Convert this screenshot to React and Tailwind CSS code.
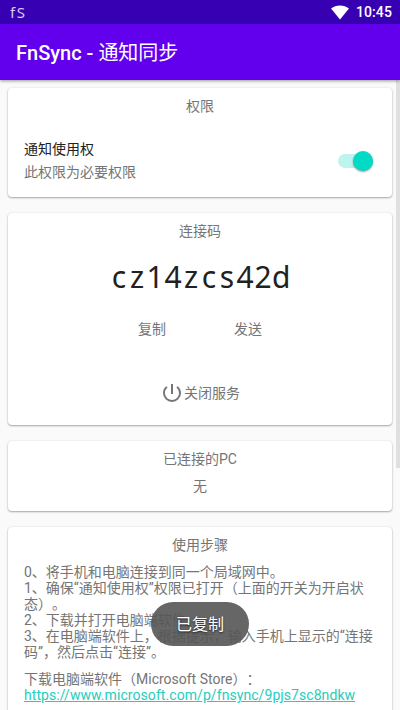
import React, { useState } from 'react';

const CODE = 'cz14zcs42d';

const STEPS = [
  '0、将手机和电脑连接到同一个局域网中。',
  '1、确保“通知使用权”权限已打开（上面的开关为开启状态）。',
  '2、下载并打开电脑端软件。',
  '3、在电脑端软件上，根据提示，输入手机上显示的“连接码”，然后点击“连接”。',
];

function StatusBar() {
  return (
    <div className="h-6 bg-[#3700b3] flex items-center justify-between pl-[10px] pr-2 text-white">
      <span className="font-['Noto_Sans',sans-serif] text-[15px] leading-6 tracking-[1.5px] text-[#d8ccf2]">fS</span>
      <div className="flex items-center gap-[7px]">
        <svg width="18" height="15" viewBox="0 0 18 15" fill="currentColor">
          <path d="M0 3.4C2.5 1.5 5.6.4 9 .4s6.500 1.100 9 3L9 14.600z" />
        </svg>
        <span className="text-[14px] leading-6 font-medium tracking-[0.1px]">10:45</span>
      </div>
    </div>
  );
}

function Card({ title, className = '', children }) {
  return (
    <section className={`bg-white rounded-[4px] shadow-[0_1px_2px_rgba(0,0,0,0.32),0_0_2px_rgba(0,0,0,0.1)] px-4 ${className}`}>
      <h2 className="pt-[10px] text-center leading-4">{title}</h2>
      {children}
    </section>
  );
}

function Switch({ checked, onChange }) {
  return (
    <button
      type="button"
      role="switch"
      aria-checked={checked}
      onClick={onChange}
      className={`w-[35px] h-[14px] rounded-full flex items-center ${checked ? 'justify-end bg-[#bdf4ee]' : 'justify-start bg-[#bdbdbd]'}`}
    >
      <span className={`w-5 h-5 shrink-0 rounded-full shadow-[0_1px_2px_rgba(0,0,0,0.4)] ${checked ? 'bg-[#03dac5]' : 'bg-[#fafafa]'}`} />
    </button>
  );
}

export default function App() {
  const [granted, setGranted] = useState(true);

  return (
    <div className="relative w-full h-[710px] overflow-hidden bg-[#fafafa] flex flex-col font-[Roboto,'Noto_Sans_CJK_SC',sans-serif] text-[14px] leading-4 text-[#757575] [text-spacing-trim:space-all]">
      <StatusBar />
      <header className="relative z-10 h-14 shrink-0 bg-[#6200ee] shadow-[0_1px_3px_rgba(0,0,0,0.4)] flex items-center px-4">
        <h1 className="text-white text-[20px] leading-6 font-medium pt-[2px]">
          FnSync - <span className="font-normal">通知同步</span>
        </h1>
      </header>

      <main className="flex-1 min-h-0 flex">
        <div className="w-[396px] shrink-0 pl-2 pr-1 pt-2 flex flex-col gap-4">
          <Card title="权限" className="h-[109px] shrink-0">
            <div className="mt-[25px] flex items-center justify-between pr-[3px]">
              <div>
                <p className="text-[#212121] leading-5">通知使用权</p>
                <p className="mt-[3px] leading-5">此权限为必要权限</p>
              </div>
              <Switch checked={granted} onChange={() => setGranted(!granted)} />
            </div>
          </Card>

          <Card title="连接码" className="h-[212px] shrink-0">
            <p className="mt-[17px] flex justify-center font-['Noto_Sans',sans-serif] text-[30px] leading-[42px] text-[#212121]">
              {CODE.split('').map((char, i) => (
                <span key={i} className="w-[18px] text-center">{char}</span>
              ))}
            </p>
            <div className="mt-[23px] flex justify-center">
              <button type="button" className="w-24 leading-4">复制</button>
              <button type="button" className="w-24 leading-4">发送</button>
            </div>
            <button type="button" className="mt-11 mx-auto flex items-center leading-6">
              <svg width="24" height="24" viewBox="0 0 24 24" fill="currentColor">
                <path d="M13 3h-2v10h2V3zm4.830 2.170l-1.420 1.420A6.920 6.920 0 0 1 19 12c0 3.870-3.130 7-7 7A6.995 6.995 0 0 1 7.580 6.580L6.170 5.170A8.932 8.932 0 0 0 3 12a9 9 0 0 0 18 0c0-2.740-1.230-5.180-3.170-6.830z" />
              </svg>
              关闭服务
            </button>
          </Card>

          <Card title="已连接的PC" className="h-[70px] shrink-0">
            <p className="mt-[11px] text-center">无</p>
          </Card>

          <Card title="使用步骤" className="h-[260px] shrink-0">
            <div className="mt-[11px]">
              {STEPS.map((step) => (
                <p key={step}>{step}</p>
              ))}
            </div>
            <p className="mt-[11px]">下载电脑端软件（Microsoft Store）：</p>
            <a className="text-[#26cdbd] underline underline-offset-1 tracking-[0.07px]" href="#store">https://www.microsoft.com/p/fnsync/9pjs7sc8ndkw</a>
          </Card>
        </div>

        {/* Scroll thumb */}
        <div className="w-1 h-[388px] bg-[#e0e0e0]" />
      </main>

      {/* Toast */}
      <div className="absolute left-[151px] top-[602px] z-20 w-[98px] h-11 rounded-full bg-[#555555]/90 flex items-center justify-center pt-px text-white text-[16px] leading-5 [text-shadow:0_1px_2px_rgba(0,0,0,0.7)]">
        已复制
      </div>
    </div>
  );
}
